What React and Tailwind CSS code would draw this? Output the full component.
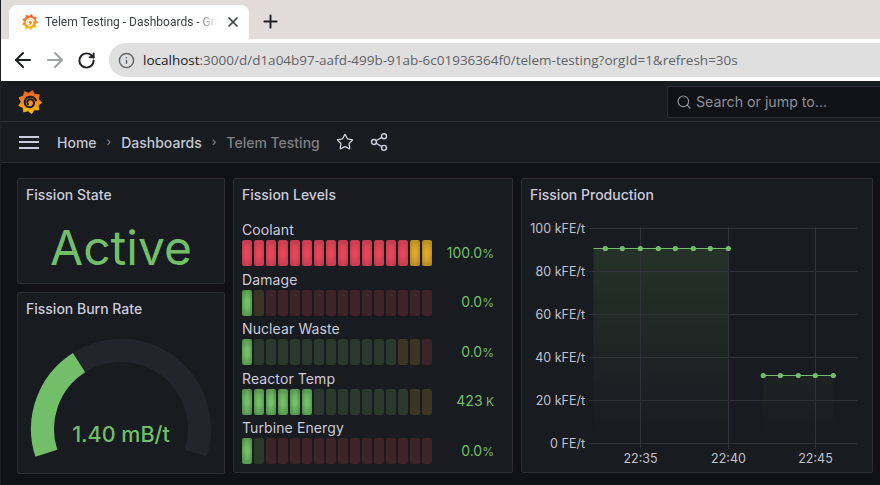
import React from "react";
import { Search, Share2, Star, X, Plus, ArrowLeft, ArrowRight, RotateCw, Info } from "lucide-react";

const INTER = "font-['Inter','Noto_Sans',sans-serif]";

function Logo({ size, spiral, id }) {
  const pts = [];
  for (let i = 0; i < 18; i++) {
    const a = ((i * 20 - 78) * Math.PI) / 180;
    const r = i % 2 === 0 ? 11.8 : 8.9;
    pts.push(`${(12 + Math.cos(a) * r).toFixed(2)},${(12 + Math.sin(a) * r).toFixed(2)}`);
  }
  const sp = [];
  for (let i = 0; i <= 60; i++) {
    const t = i / 60;
    const a = ((-20 - t * 560) * Math.PI) / 180;
    const r = 6.4 - t * 4;
    sp.push(`${(12 + Math.cos(a) * r).toFixed(2)} ${(12.6 + Math.sin(a) * r).toFixed(2)}`);
  }
  return (
    <svg width={size} height={size} viewBox="0 0 24 24" className="shrink-0">
      <defs>
        <linearGradient id={id} x1="0" y1="1" x2="0" y2="0">
          <stop offset="0" stopColor="#fcc30d" />
          <stop offset="1" stopColor="#f05a28" />
        </linearGradient>
      </defs>
      <polygon points={pts.join(" ")} fill={`url(#${id})`} stroke={`url(#${id})`} strokeWidth="0.8" strokeLinejoin="round" />
      <path d={`M${sp.join(" L")}`} fill="none" stroke={spiral} strokeWidth="2" strokeLinecap="round" />
    </svg>
  );
}

function Panel({ title, className = "", children }) {
  return (
    <section className={`relative rounded-[2px] border border-[#2c2e33] bg-[#181b1f] ${className}`}>
      <h2 className="pl-2 pt-[6px] text-[14px] leading-[19px] font-medium text-[#ccccdc]">{title}</h2>
      {children}
    </section>
  );
}

const SEG = {
  R: "bg-[radial-gradient(ellipse_at_center,#e8455a_20%,#b23a4a_100%)]",
  Y: "bg-[radial-gradient(ellipse_at_center,#e0a82b_20%,#a58024_100%)]",
  G: "bg-[radial-gradient(ellipse_at_center,#73bf69_20%,#4a8444_100%)]",
  r: "bg-[#3e2329]",
  y: "bg-[#3d3523]",
  g: "bg-[#2a392b]",
};

const GAUGES = [
  { label: "Coolant", value: "100.0", unit: "%", segs: "RRRRRRRRRRRRRRYY" },
  { label: "Damage", value: "0.0", unit: "%", segs: "Gyrrrrrrrrrrrrrr" },
  { label: "Nuclear Waste", value: "0.0", unit: "%", segs: "Gggggggggggggyyr" },
  { label: "Reactor Temp", value: "423", unit: " K", segs: "GGGGGGggggggggyy" },
  { label: "Turbine Energy", value: "0.0", unit: "%", segs: "Ggrrrrrrrrrrrrrr" },
];

function BarGauge({ label, value, unit, segs }) {
  return (
    <div className="h-[49.5px]">
      <div className="text-[14px] leading-[20px] tracking-[0.1px] text-[#ccccdc]">{label}</div>
      <div className="flex h-[26px] items-center">
        <div className="flex h-[26px] gap-[2px]">
          {segs.split("").map((s, i) => (
            <div key={i} className={`h-full w-[10px] rounded-[2px] ${SEG[s]}`} />
          ))}
        </div>
        <div className="w-[62px] whitespace-pre text-right text-[14px] leading-[20px] text-[#73bf69]">
          {value}
          <span className="text-[12px]">{unit}</span>
        </div>
      </div>
    </div>
  );
}

function Gauge() {
  const cx = 103, cy = 111, r = 78.5;
  const pt = (deg) => {
    const a = (deg * Math.PI) / 180;
    return [cx + r * Math.cos(a), cy - r * Math.sin(a)];
  };
  const [sx, sy] = pt(198);
  const [vx, vy] = pt(122.3);
  const [ex, ey] = pt(-18);
  return (
    <svg width="206" height="160" viewBox="0 0 206 160" className="block">
      <path d={`M${vx} ${vy} A${r} ${r} 0 0 1 ${ex} ${ey}`} fill="none" stroke="#22252b" strokeWidth="23" />
      <path d={`M${sx} ${sy} A${r} ${r} 0 0 1 ${vx} ${vy}`} fill="none" stroke="#73bf69" strokeWidth="23" />
      <text x="103" y="124" textAnchor="middle" fill="#73bf69" fontSize="21.5" fontWeight="500" fontFamily="Inter, sans-serif">1.40 mB/t</text>
    </svg>
  );
}

function Chart() {
  const hy = [51, 94, 137, 180, 223, 266];
  const yLabels = ["100 kFE/t", "80 kFE/t", "60 kFE/t", "40 kFE/t", "20 kFE/t", "0 FE/t"];
  const a = [83.3, 100.3, 118.3, 136.3, 153.3, 171.3, 188.3, 206.3];
  const b = [241.3, 258.3, 276.3, 293.3, 311.3];
  return (
    <svg width="350" height="293" viewBox="0 0 350 293" className="absolute left-0 top-0">
      <defs>
        <linearGradient id="area2" gradientUnits="userSpaceOnUse" x1="0" y1="69" x2="0" y2="265">
          <stop offset="0" stopColor="#73bf69" stopOpacity="0.14" />
          <stop offset="1" stopColor="#73bf69" stopOpacity="0" />
        </linearGradient>
      </defs>
      <rect x="71.5" y="69.5" width="134.8" height="196" fill="url(#area2)" />
      <rect x="241.3" y="196.5" width="70" height="69" fill="url(#area2)" />
      {hy.map((y) => <line key={y} x1="67" x2="335" y1={y - 1.5} y2={y - 1.5} stroke="#2f3237" />)}
      {[118.5, 206.5, 293.5].map((x) => <line key={x} x1={x} x2={x} y1="48" y2="270" stroke="#2f3237" />)}
      <line x1="71.5" x2="206.3" y1="69.5" y2="69.5" stroke="#73bf69" strokeWidth="1" />
      <line x1="241.3" x2="311.3" y1="196.5" y2="196.5" stroke="#73bf69" strokeWidth="1" />
      {[...a.map((x) => [x, 69.5]), ...b.map((x) => [x, 196.5])].map(([x, y]) => <circle key={x} cx={x} cy={y} r="2.6" fill="#73bf69" />)}
      {yLabels.map((l, i) => (
        <text key={l} x="63" y={hy[i] + 3} textAnchor="end" fill="#c1c2cf" fontSize="12.5" fontFamily="Inter, sans-serif">{l}</text>
      ))}
      {[["22:35", 118.5], ["22:40", 206.5], ["22:45", 293.5]].map(([l, x]) => (
        <text key={l} x={x} y="284" textAnchor="middle" fill="#c1c2cf" fontSize="12.5" fontFamily="Inter, sans-serif">{l}</text>
      ))}
    </svg>
  );
}

export default function App() {
  return (
    <div className={`flex h-[485px] w-[880px] flex-col overflow-hidden border-l border-[#1f2023] bg-[#111217] ${INTER}`}>
      {/* browser tab strip */}
      <div className="flex h-[39px] shrink-0 items-end bg-[#e3dbd9] pl-[8px]">
        <div className="flex h-[34px] w-[240px] items-center rounded-t-[8px] bg-white pl-[13px] pr-[8px]">
          <Logo size={16} spiral="#ffffff" id="tablogo" />
          <span className="ml-[7px] w-[172px] overflow-hidden whitespace-nowrap font-['Roboto',sans-serif] text-[12px] leading-[16px] text-[#3c4043] [mask-image:linear-gradient(90deg,#000_150px,transparent_172px)]">Telem Testing - Dashboards - Grafana</span>
          <X className="ml-auto text-[#3c4043]" size={16} strokeWidth={2.6} />
        </div>
        <Plus className="mb-[7px] ml-[11px] text-[#202124]" size={21} strokeWidth={2.2} />
      </div>
      {/* browser toolbar */}
      <div className="flex h-[42px] shrink-0 items-center bg-white pl-[10px]">
        <ArrowLeft size={24} strokeWidth={2.1} className="text-[#202124]" />
        <ArrowRight size={24} strokeWidth={2.1} className="ml-[8px] text-[#a0a2a5]" />
        <RotateCw size={19} strokeWidth={2.5} className="ml-[10px] text-[#202124]" />
        <div className="ml-[13px] flex h-[34px] flex-1 items-center rounded-l-[17px] bg-[#dfdfdf] pl-[9px]">
          <Info size={17} strokeWidth={2} className="text-[#5f6368]" />
          <span className="ml-[8px] whitespace-nowrap font-['Open_Sans',sans-serif] text-[13.5px] text-[#5f6368]">
            <span className="text-[#202124]">localhost</span>:3000/d/d1a04b97-aafd-499b-91ab-6c01936364f0/telem-testing?orgId=1&amp;refresh=30s
          </span>
        </div>
      </div>
      {/* grafana nav */}
      <div className="flex h-[41px] shrink-0 items-center border-b border-[#2c2e33] bg-[#181b1f] pl-[17px] pt-[1px]">
        <Logo size={24} spiral="#181b1f" id="navlogo" />
        <div className="ml-auto flex h-[32px] w-[213px] items-center rounded-l-[2px] border border-r-0 border-[#2c2e33] bg-[#111217] pl-[8px] text-[14.2px] text-[#8e8f98]">
          <Search size={16} strokeWidth={1.8} />
          <span className="ml-[4px]">Search or jump to...</span>
        </div>
      </div>
      {/* grafana toolbar */}
      <div className="flex h-[41px] shrink-0 items-center border-b border-[#2c2e33] bg-[#181b1f] pl-[18px] text-[14px] font-medium">
        <div className="flex h-[13px] w-[20px] flex-col justify-between">
          <div className="h-[2px] bg-[#ccccdc]" /><div className="h-[2px] bg-[#ccccdc]" /><div className="h-[2px] bg-[#ccccdc]" />
        </div>
        <span className="ml-[18px] text-[#c5c6d3]">Home</span>
        <span className="mx-[10px] text-[12px] font-normal text-[#8e8f98]">›</span>
        <span className="text-[#c5c6d3]">Dashboards</span>
        <span className="mx-[10px] text-[12px] font-normal text-[#8e8f98]">›</span>
        <span className="text-[#7f8088]">Telem Testing</span>
        <Star size={18} strokeWidth={1.8} className="ml-[16px] text-[#ccccdc]" />
        <Share2 size={20} strokeWidth={1.7} className="ml-[15px] text-[#ccccdc]" />
      </div>
      {/* dashboard */}
      <div className="flex flex-1 gap-[8px] pl-[16px] pt-[15px]">
        <div className="flex w-[208px] flex-col gap-[8px]">
          <Panel title="Fission State" className="h-[106px]">
            <div className="mt-[16px] text-center text-[48px] leading-[56px] text-[#73bf69]">Active</div>
          </Panel>
          <Panel title="Fission Burn Rate" className="h-[182px]">
            <Gauge />
          </Panel>
        </div>
        <Panel title="Fission Levels" className="h-[295px] w-[280px]">
          <div className="mt-[16px] pl-[8px]">
            {GAUGES.map((g) => <BarGauge key={g.label} {...g} />)}
          </div>
        </Panel>
        <Panel title="Fission Production" className="h-[295px] w-[352px]">
          <Chart />
        </Panel>
      </div>
    </div>
  );
}
